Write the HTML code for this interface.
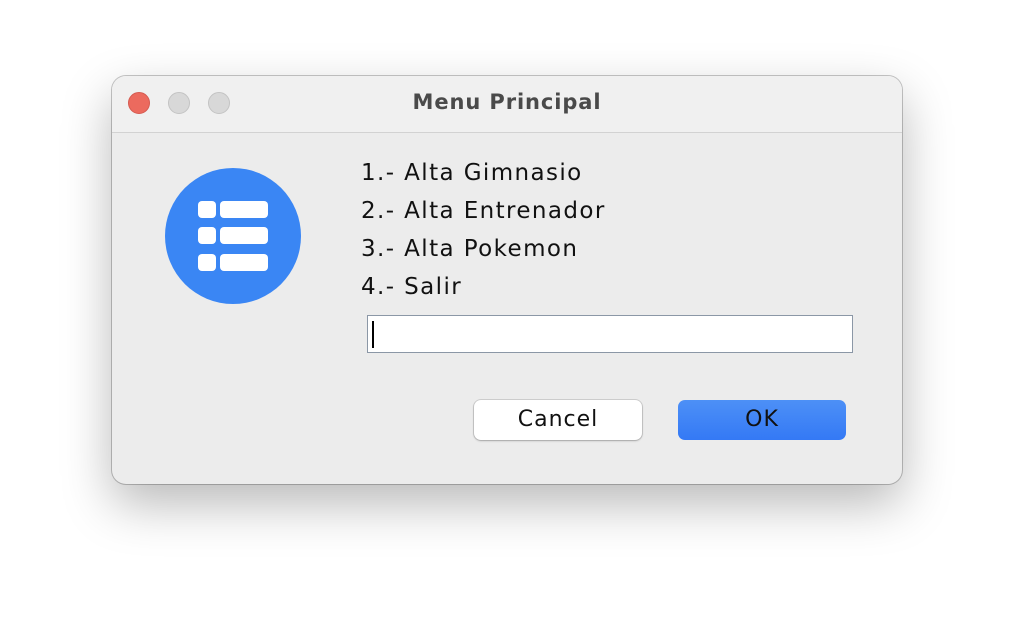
<!DOCTYPE html>
<html><head><style>
body{margin:0;width:1014px;height:632px;background:#fff;position:relative;overflow:hidden;font-family:"DejaVu Sans","Liberation Sans",sans-serif}
.win{position:absolute;left:112px;top:76px;width:790px;height:408px;border-radius:14px;background:#ececec;box-shadow:0 20px 50px rgba(0,0,0,.28),0 0 0 1px rgba(0,0,0,.22);overflow:hidden}
.tb{position:absolute;left:0;top:0;right:0;height:56px;background:#f0f0f0;border-bottom:1px solid #d2d2d2}
.dot{position:absolute;top:16px;width:22px;height:22px;border-radius:50%;background:#d8d8d8;border:1px solid #c3c3c3;box-sizing:border-box}
.title{position:absolute;left:0;right:0;top:14px;text-align:center;font-weight:bold;font-size:21px;letter-spacing:.9px;color:#4a4a4a}
.t{position:absolute;left:249px;font-size:23px;letter-spacing:1.4px;color:#111;line-height:28px}
.field{position:absolute;left:255px;top:239px;width:486px;height:38px;box-sizing:border-box;background:#fff;border:1px solid #8b97a6}
.caret{position:absolute;left:4px;top:5px;width:2px;height:27px;background:#000}
.btn{position:absolute;top:324px;width:168px;height:40px;border-radius:7px;box-sizing:border-box;text-align:center;line-height:40px;font-size:22px;letter-spacing:1px;color:#111}
</style></head><body>
<div class="win">
<div class="tb">
<div class="dot" style="left:16px;background:#ec6a5e;border-color:#d55a50"></div>
<div class="dot" style="left:56px"></div>
<div class="dot" style="left:96px"></div>
<div class="title">Menu Principal</div>
</div>
<svg style="position:absolute;left:53px;top:92px" width="136" height="136" viewBox="0 0 136 136">
<circle cx="68" cy="68" r="68" fill="#3a86f4"/>
<g fill="#fff">
<rect x="33" y="33" width="18" height="17" rx="4"/><rect x="55" y="33" width="48" height="17" rx="4"/>
<rect x="33" y="59" width="18" height="17" rx="4"/><rect x="55" y="59" width="48" height="17" rx="4"/>
<rect x="33" y="86" width="18" height="17" rx="4"/><rect x="55" y="86" width="48" height="17" rx="4"/>
</g></svg>
<div class="t" style="top:83px">1.- Alta Gimnasio</div>
<div class="t" style="top:121px">2.- Alta Entrenador</div>
<div class="t" style="top:159px">3.- Alta Pokemon</div>
<div class="t" style="top:197px">4.- Salir</div>
<div class="field"><div class="caret"></div></div>
<div class="btn" style="left:362px;background:#fff;box-shadow:0 0 0 1px rgba(0,0,0,.12),0 1px 2px rgba(0,0,0,.2)">Cancel</div>
<div class="btn" style="left:566px;background:linear-gradient(#4d90f6,#3479f5)">OK</div>
</div>
</body></html>
